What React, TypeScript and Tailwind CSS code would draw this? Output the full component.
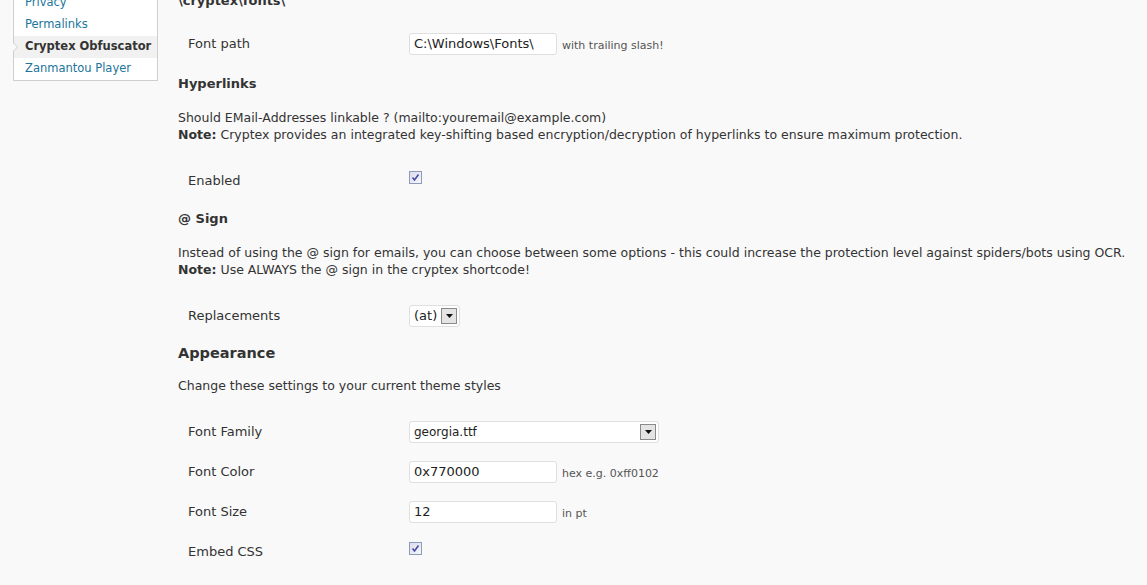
const font = { fontFamily: '"DejaVu Sans", Verdana, sans-serif' };

const Checkbox = () => (
  <div className="w-[13px] h-[13px] border border-[#8c9bb8] bg-gradient-to-br from-[#dcdcec] to-[#f6f6fb] flex items-center justify-center">
    <svg width="9" height="9" viewBox="0 0 9 9">
      <path d="M1.5 4.5 L3.5 7 L7.5 1.5" fill="none" stroke="#4a4aa6" strokeWidth="1.6" />
    </svg>
  </div>
);

const DropButton = () => (
  <div className="w-[16px] h-[16px] border border-[#8a8a8a] bg-[#e4e4e4] flex items-center justify-center">
    <svg width="7" height="4" viewBox="0 0 7 4">
      <path d="M0 0 H7 L3.5 4 Z" fill="#111" />
    </svg>
  </div>
);

const TextInput = ({ value }: { value: string }) => (
  <div className="w-[148px] h-[22px] bg-white border border-[#dfdfdf] rounded-[3px] flex items-center pl-[4px] text-[13px] text-[#222]">
    {value}
  </div>
);

const Row = ({ label, children }: { label: string; children: React.ReactNode }) => (
  <div className="flex items-center h-[40px]">
    <div className="w-[231px] pl-[10px] text-[13px] text-[#333]">{label}</div>
    <div className="flex items-center">{children}</div>
  </div>
);

const Hint = ({ text }: { text: string }) => (
  <span className="ml-[5px] mt-[5px] text-[11px] text-[#555]">{text}</span>
);

export default function App() {
  return (
    <div className="w-[1147px] h-[585px] overflow-hidden bg-[#f9f9f9] flex" style={font}>
      <div className="ml-[13px] w-[145px] mt-[-8px] self-start">
        <div className="bg-white border border-t-0 border-[#cfcfcf] text-[11.5px] text-[#21759b]">
          <div className="h-[22px] flex items-center pl-[11px]">Privacy</div>
          <div className="h-[22px] flex items-center pl-[11px]">Permalinks</div>
          <div className="relative h-[22px] flex items-center pl-[11px] bg-[#f1f1f1] font-bold text-[#333]">
            <span className="absolute left-[-1px] top-[6px] w-0 h-0 border-y-[5px] border-y-transparent border-l-[5px] border-l-[#cfcfcf]" />
            <span className="absolute left-[-1px] top-[7px] w-0 h-0 border-y-[4px] border-y-transparent border-l-[4px] border-l-[#f9f9f9]" />
            Cryptex Obfuscator
          </div>
          <div className="h-[22px] flex items-center pl-[11px]">Zanmantou Player</div>
        </div>
      </div>

      <div className="ml-[20px] mt-[-9px] flex-1 text-[#333] text-[13px]">
        <div className="h-[20px] flex items-center font-bold">\cryptex\fonts\</div>
        <div className="mt-[13px]">
          <Row label="Font path">
            <TextInput value="C:\Windows\Fonts\" />
            <Hint text="with trailing slash!" />
          </Row>
        </div>

        <div className="mt-[10px] h-[20px] flex items-center font-bold">Hyperlinks</div>
        <p className="mt-[15px] leading-[17px] text-[12.5px]">
          Should EMail-Addresses linkable ? (mailto:youremail@example.com)
          <br />
          <b>Note:</b> Cryptex provides an integrated key-shifting based encryption/decryption of hyperlinks to ensure maximum protection.
        </p>
        <div className="mt-[18px]">
          <Row label="Enabled">
            <div className="mt-[-8px]">
              <Checkbox />
            </div>
          </Row>
        </div>

        <div className="mt-[8px] h-[20px] flex items-center font-bold">@ Sign</div>
        <p className="mt-[15px] leading-[17px] text-[12.5px]">
          Instead of using the @ sign for emails, you can choose between some options - this could increase the protection level against spiders/bots using OCR.
          <br />
          <b>Note:</b> Use ALWAYS the @ sign in the cryptex shortcode!
        </p>
        <div className="mt-[18px]">
          <Row label="Replacements">
            <div className="w-[51px] h-[22px] bg-white border border-[#dfdfdf] rounded-[3px] flex items-center justify-between pl-[4px] pr-[2px] text-[13px] text-[#222]">
              (at)
              <DropButton />
            </div>
          </Row>
        </div>

        <div className="mt-[8px] h-[20px] flex items-center font-bold text-[14.5px]">Appearance</div>
        <p className="mt-[13px] leading-[17px] text-[12.5px]">Change these settings to your current theme styles</p>
        <div className="mt-[18px]">
          <Row label="Font Family">
            <div className="w-[250px] h-[22px] bg-white border border-[#dfdfdf] rounded-[3px] flex items-center justify-between pl-[4px] pr-[2px] text-[12px] text-[#222]">
              georgia.ttf
              <DropButton />
            </div>
          </Row>
          <Row label="Font Color">
            <TextInput value="0x770000" />
            <Hint text="hex e.g. 0xff0102" />
          </Row>
          <Row label="Font Size">
            <TextInput value="12" />
            <Hint text="in pt" />
          </Row>
          <Row label="Embed CSS">
            <div className="mt-[-8px]">
              <Checkbox />
            </div>
          </Row>
        </div>
      </div>
    </div>
  );
}
